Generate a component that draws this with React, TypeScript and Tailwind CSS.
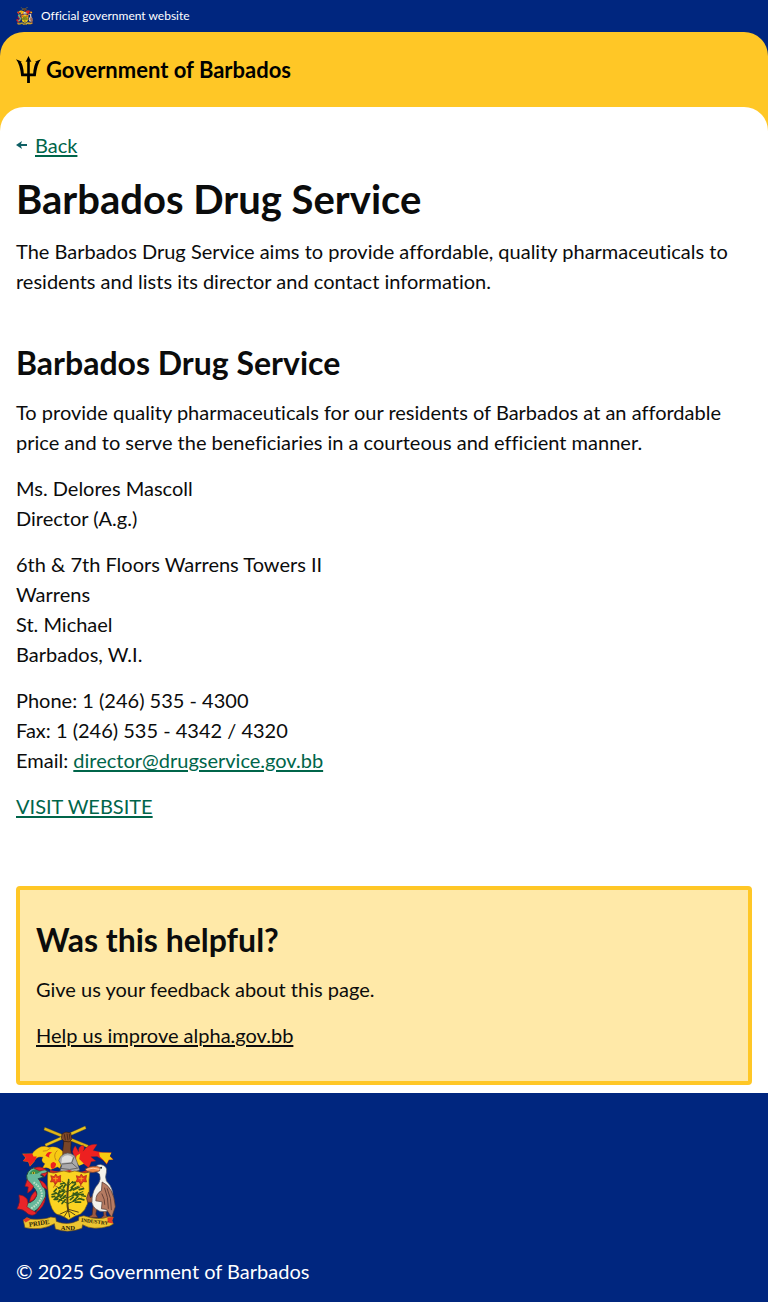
import React from "react";

function Crest({ className }: { className: string }) {
  return (
    <svg viewBox="18 15 300 323" className={className} aria-hidden="true">
      {/* crossed sugar canes and arm */}
      <path d="M162 58 L184 58 Q180 88 186 118 L154 118 Q158 94 160 76 Z" fill="#7a4528" stroke="#2b1710" strokeWidth="2" />
      <path d="M104 22 L236 76 L233 84 L101 30 Z" fill="#ddb419" stroke="#5f4a10" strokeWidth="1" />
      <path d="M104 72 L226 18 L229 26 L107 80 Z" fill="#e9c41f" stroke="#5f4a10" strokeWidth="1" />
      <path d="M156 42 Q166 32 182 39 L186 57 L178 66 L162 64 L154 56 Z" fill="#80492a" stroke="#2b1710" strokeWidth="2" />
      <path d="M163 43 L166 61 M171 41 L174 61 M178 42 L180 59" stroke="#2b1710" strokeWidth="2" />
      {/* mantling */}
      <path d="M158 94 Q140 76 116 82 Q92 72 70 96 L66 102 L36 102 L46 114 L38 124 L54 126 L59 140 L72 126 Q78 108 98 112 Q90 124 104 132 L96 146 Q112 140 122 150 L142 142 L150 146 L157 124 Z" fill="#f8cb12" stroke="#7b3410" strokeWidth="1" />
      <path d="M66 101 L37 103 L47 114 L38 124 L54 126 L59 139 L74 123 L80 110 L70 110 Z M106 108 Q112 92 126 98 Q114 104 118 114 Z M122 132 Q130 122 138 132 Q138 142 128 148 Q120 146 122 132 Z" fill="#ed2020" />
      <path d="M122 84 Q110 96 98 94 M142 92 Q128 104 138 122" stroke="#c98a10" strokeWidth="3" fill="none" />
      <path d="M188 96 Q190 84 196 78 L206 96 Q204 78 220 76 Q226 84 220 94 Q236 70 262 74 L250 92 L279 98 L305 98 L299 108 L311 119 L298 120 L291 134 L281 122 L262 110 L243 111 L258 124 L244 126 L237 145 L218 130 L199 132 Z" fill="#ed2020" stroke="#7b2515" strokeWidth="1" />
      <path d="M268 98 L305 99 L300 109 L310 119 L297 120 L291 132 L280 120 L270 110 Z M200 108 L211 101 L208 118 L222 132 L208 138 L196 125 Z" fill="#f8cb12" />
      {/* helmet */}
      <path d="M152 110 Q172 90 194 108 Q202 126 209 151 Q184 164 150 153 L155 138 L146 122 Z" fill="#aaa9ab" stroke="#555" strokeWidth="2" />
      <path d="M156 114 Q172 100 188 112 L184 127 L154 130 Z" fill="#dedede" />
      <path d="M155 133 L186 130 L203 145 M185 130 L192 112 M152 146 Q180 153 204 145" stroke="#656565" strokeWidth="3" fill="none" />
      <path d="M120 151 Q147 160 178 151 Q204 164 233 151 L233 160 L120 160 Z" fill="#ca2920" />
      {/* shield */}
      <path d="M113 156 Q130 164 146 157 Q162 150 178 158 Q194 150 210 157 Q226 164 240 156 Q236 180 238 208 Q240 262 212 284 Q192 290 176 301 Q162 290 139 284 Q108 260 113 156 Z" fill="#fbd321" stroke="#7c5911" strokeWidth="2" />
      {/* flowers */}
      <g fill="#e63a1f" stroke="#a62b15" strokeWidth="2">
        <path d="M122 168 L132 171 L137 163 L143 171 L152 167 L151 178 L153 187 L143 186 L136 195 L130 186 L121 187 L125 178 Z" />
        <path d="M199 168 L209 171 L214 163 L220 171 L230 167 L228 178 L230 187 L220 186 L213 195 L207 186 L198 187 L202 178 Z" />
        <path d="M137 190 L130 204 M135 198 L144 204 M214 190 L209 204 M212 198 L222 204" />
      </g>
      <path d="M129 177 H144 M137 171 V185 M206 177 H221 M214 171 V185" stroke="#f9a31a" strokeWidth="3" />
      {/* fig tree */}
      <g fill="none" stroke="#35591a" strokeLinecap="round">
        <path d="M175 275 Q169 245 175 188" strokeWidth="6" stroke="#554318" />
        <path d="M174 252 L138 235 M174 252 L214 236 M173 236 L133 217 M174 234 L219 216 M173 218 L143 203 M174 215 L205 200 M174 200 L158 186 M174 200 L188 185" strokeWidth="3" />
        <path d="M132 216 L139 208 M135 236 L149 228 M145 246 L157 236 M146 206 L157 198 M148 219 L162 211 M156 252 L166 240 M152 193 L163 190 M160 205 L167 194 M186 189 L196 188 M184 204 L197 193 M190 211 L207 203 M187 228 L202 218 M201 225 L220 224 M190 245 L202 233 M207 237 L222 241 M176 190 L176 180 M149 213 L144 226 M190 221 L204 230 M139 221 L126 225 M208 210 L221 207 M151 233 L160 222 M132 240 L142 240 M196 248 L212 248 M182 213 L187 206 M166 228 L160 236 M181 240 L190 233 M216 228 L226 230 M126 232 L134 230 M164 218 L156 214" strokeWidth="5" />
        <path d="M174 273 L150 284 M173 275 L163 291 M175 272 L179 293 M176 274 L195 286 M177 270 L205 278" stroke="#554318" strokeWidth="3" />
      </g>
      {/* dolphin */}
      <path d="M49 168 Q56 140 88 143 L112 153 L108 162 L91 166 L101 172 L84 177 Q112 206 106 234 Q98 262 66 280 Q44 280 34 262 L50 252 Q80 244 80 220 Q76 206 62 196 Q47 184 49 168 Z" fill="#67b99b" stroke="#20443c" strokeWidth="3" />
      <path d="M57 164 Q66 142 97 152 L81 162 Z" fill="#388f55" />
      <path d="M72 146 Q90 136 108 150 L88 153 Z M93 163 L113 158 L104 171 Z M51 180 L70 200 Q66 214 52 220 L54 202 L44 200 Z M76 214 Q60 226 58 248 Q72 244 80 226 Z M88 182 Q108 188 112 210 L98 202 Z M106 232 Q104 262 76 280 L92 256 Z M20 268 Q32 248 26 226 Q40 226 50 238 Q56 250 50 262 Q62 272 80 280 Q70 292 54 284 Q40 268 20 268 Z" fill="#e92429" stroke="#8b1820" strokeWidth="2" />
      <path d="M70 188 Q100 208 94 234 Q84 256 60 268" fill="none" stroke="#bedfc7" strokeWidth="6" strokeDasharray="5 3" />
      <circle cx="70" cy="160" r="4" fill="#f8df32" />
      <circle cx="70" cy="160" r="2" fill="#111" />
      {/* pelican */}
      <path d="M250 256 L247 286 L232 296 L264 294 L258 284 L263 254 M280 265 L282 288 L272 298 L296 298 L289 286 L290 262 M257 248 L233 248 L230 236 L236 218 L242 235 L252 225 L251 240 L267 240" fill="#9d5941" stroke="#4b2b22" strokeWidth="2" />
      <path d="M256 154 Q253 134 272 134 Q295 138 290 158 Q285 172 290 184 Q318 209 308 262 Q298 281 270 275 Q242 264 247 236 Q249 210 265 193 Q275 180 269 163 Z" fill="#f4f2eb" stroke="#595a62" strokeWidth="2" />
      <path d="M277 187 Q312 202 317 262 L306 294 L290 270 L275 268 L277 247 L258 244 Q258 222 275 213 Z" fill="#b67b62" stroke="#49322e" strokeWidth="2" />
      <path d="M284 204 Q296 232 296 268 M292 206 Q306 236 305 272 M276 222 Q286 240 285 256" stroke="#684339" strokeWidth="3" fill="none" />
      <path d="M271 143 Q248 134 226 148 L231 155 Q249 162 269 154 Z" fill="#f08745" stroke="#6f3926" strokeWidth="2" />
      <path d="M230 149 Q250 142 269 149" stroke="#ffd0a4" strokeWidth="3" fill="none" />
      <circle cx="274" cy="144" r="3" fill="#222" />
      {/* motto ribbon */}
      <path d="M39 302 L50 294 L61 299 Q101 302 122 293 L137 295 L139 306 Q172 320 206 303 L207 292 L222 289 Q267 305 298 291 L311 293 L307 304 L311 314 L300 320 Q249 335 218 316 L216 327 Q174 343 136 329 L133 313 Q96 335 44 325 Z" fill="#ecc531" stroke="#715018" strokeWidth="2" />
      <path d="M39 302 L50 294 L61 300 L46 309 Z M293 294 L311 293 L307 304 L311 312 L294 309 Z" fill="#e43b25" />
      <g fill="#292008" fontFamily="Liberation Serif, serif" fontWeight="700" fontSize="20">
        <text x="57" y="322" transform="rotate(-8 57 322)">PRIDE</text>
        <text x="152" y="333">AND</text>
        <text x="213" y="307" transform="rotate(7 213 307)" fontSize="16">INDUSTRY</text>
      </g>
    </svg>
  );
}

function Trident() {
  return (
    <svg width="25" height="27" viewBox="0 0 25 27" aria-hidden="true">
      <path d="M12.5 0 L15.4 6 L13.8 5.6 V17.6 H17.2 Q17.8 9 20.3 5.8 L18.6 6 Q22 4.5 25 3.2 Q21 8 19.8 20.2 H13.9 V27 H11.1 V20.2 H5.2 Q4 8 0 3.2 Q3 4.5 6.4 6 L4.7 5.8 Q7.2 9 7.8 17.6 H11.2 V5.6 L9.6 6 Z" fill="#000" />
    </svg>
  );
}

const bodyText = "text-[20px] leading-[30px]";
const link = "text-[#00654a] underline decoration-2 underline-offset-2";
const sectionHeading = "text-[32px] leading-[37px] font-bold";

export default function App() {
  return (
    <div className="bg-[#00267f] text-[#0b0c0c] font-[Lato,sans-serif] [font-variant-ligatures:none]">
      <div className="flex h-8 items-center gap-2 px-4 text-xs text-white">
        <Crest className="h-[18px] w-[17px]" />
        <span>Official government website</span>
      </div>
      <header className="rounded-t-3xl bg-[#ffc726]">
        <div className="px-4 py-6">
          <a href="#home" className="flex h-[27px] items-center gap-[5px] text-[22px] font-bold text-black">
            <Trident />
            Government of Barbados
          </a>
        </div>
      </header>
      <div className="bg-[#ffc726]">
        <main className="rounded-t-3xl bg-white px-4 pt-[23px] pb-2">
          <nav className={`flex items-center gap-2 ${bodyText}`}>
            <svg width="11" height="10" viewBox="0 0 11 10" aria-hidden="true">
              <path d="M0 5 L6 1 L5 4 H11 V6 H5 L6 9 Z" fill="#0e5f64" />
            </svg>
            <a href="#back" className={link}>Back</a>
          </nav>
          <h1 className="mt-4 text-[40px] leading-[46px] font-bold">Barbados Drug Service</h1>
          <p className={`mt-3.5 ${bodyText}`}>
            The Barbados Drug Service aims to provide affordable, quality pharmaceuticals to residents and lists its director and contact information.
          </p>
          <section className={`mt-12 flex flex-col gap-4 ${bodyText}`}>
            <h2 className={sectionHeading}>Barbados Drug Service</h2>
            <p>
              To provide quality pharmaceuticals for our residents of Barbados at an affordable price and to serve the beneficiaries in a courteous and efficient manner.
            </p>
            <p>Ms. Delores Mascoll<br />Director (A.g.)</p>
            <address className="not-italic">
              6th &amp; 7th Floors Warrens Towers II<br />Warrens<br />St. Michael<br />Barbados, W.I.
            </address>
            <p>
              Phone: 1 (246) 535 - 4300<br />
              Fax: 1 (246) 535 - 4342 / 4320<br />
              Email: <a href="mailto:director@drugservice.gov.bb" className={link}>director@drugservice.gov.bb</a>
            </p>
            <p><a href="#website" className={link}>VISIT WEBSITE</a></p>
          </section>
          <aside className={`mt-[65px] flex flex-col gap-4 rounded-sm border-4 border-[#ffc726] bg-[#ffe9a8] px-4 py-[31px] ${bodyText}`}>
            <h2 className={sectionHeading}>Was this helpful?</h2>
            <p>Give us your feedback about this page.</p>
            <p><a href="#feedback" className="underline decoration-2 underline-offset-2">Help us improve alpha.gov.bb</a></p>
          </aside>
        </main>
      </div>
      <footer className={`px-4 pt-8 pb-4 text-white ${bodyText}`}>
        <Crest className="h-[107px] w-[100px]" />
        <p className="mt-6">© 2025 Government of Barbados</p>
      </footer>
    </div>
  );
}
